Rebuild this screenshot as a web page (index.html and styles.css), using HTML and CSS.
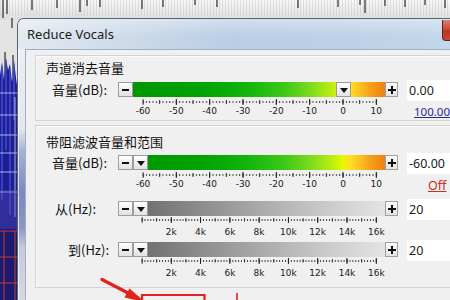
FILE: index.html
```html
<!DOCTYPE html>
<html>
<head>
<meta charset="utf-8">
<link rel="stylesheet" href="styles.css">
</head>
<body>
<svg class="bg" width="450" height="300" viewBox="0 0 450 300">
  <defs>
    <linearGradient id="topg" x1="0" y1="0" x2="0" y2="1">
      <stop offset="0" stop-color="#f8f8f8"/>
      <stop offset="1" stop-color="#dcdcdc"/>
    </linearGradient>
    <pattern id="streak" patternUnits="userSpaceOnUse" width="3" height="20">
      <rect x="0" y="0" width="1" height="20" fill="#c9c9c9"/>
    </pattern>
  </defs>
  <rect width="450" height="300" fill="#e4e4e4"/>
  <rect width="450" height="20" fill="url(#topg)"/>
  <rect width="450" height="16" fill="url(#streak)" opacity="0.55"/>
  <g stroke="#2a2a2a" stroke-width="1.2">
    <line x1="3" y1="0" x2="3" y2="18"/>
    <line x1="7" y1="0" x2="7" y2="14"/>
    <line x1="32" y1="0" x2="32" y2="10"/>
    <line x1="57" y1="0" x2="57" y2="8"/>
    <line x1="80" y1="0" x2="80" y2="12"/>
    <line x1="87" y1="0" x2="87" y2="6"/>
    <line x1="100" y1="0" x2="100" y2="7"/>
    <line x1="142" y1="0" x2="142" y2="9"/>
    <line x1="163" y1="0" x2="163" y2="7"/>
    <line x1="195" y1="0" x2="195" y2="5"/>
    <line x1="217" y1="0" x2="217" y2="7"/>
    <line x1="298" y1="0" x2="298" y2="8"/>
    <line x1="338" y1="0" x2="338" y2="7"/>
    <line x1="360" y1="0" x2="360" y2="5"/>
    <line x1="365" y1="0" x2="365" y2="13"/>
    <line x1="385" y1="0" x2="385" y2="6"/>
    <line x1="405" y1="0" x2="405" y2="7"/>
    <line x1="425" y1="0" x2="425" y2="5"/>
    <line x1="445" y1="0" x2="445" y2="8"/>
    <line x1="5" y1="52" x2="5" y2="78"/>
    <line x1="12" y1="18" x2="12" y2="28"/>
    <line x1="13" y1="55" x2="13" y2="76"/>
  </g>
  <polygon points="0,75 2,62 4,80 6,58 8,70 10,64 12,82 14,60 16,78 17,85 17,230 0,230" fill="#1c1e92"/>
  <g stroke="#4a5ae0" stroke-width="1.2">
    <line x1="2" y1="66" x2="2" y2="200"/>
    <line x1="6" y1="60" x2="6" y2="150"/>
    <line x1="10" y1="68" x2="10" y2="215"/>
    <line x1="14" y1="64" x2="14" y2="120"/>
  </g>
  <g stroke="#d8dcff" stroke-width="1" opacity="0.75">
    <line x1="0" y1="93" x2="17" y2="93"/>
    <line x1="0" y1="115" x2="17" y2="115"/>
    <line x1="0" y1="135" x2="17" y2="135"/>
    <line x1="0" y1="153" x2="17" y2="153"/>
    <line x1="0" y1="172" x2="17" y2="172"/>
    <line x1="0" y1="192" x2="17" y2="192"/>
    <line x1="15" y1="97" x2="15" y2="217"/>
  </g>
  <rect x="0" y="190" width="17" height="40" fill="#5a4ab0" opacity="0.35"/>
  <rect x="0" y="229" width="17" height="71" fill="#1a1a6e"/>
  <g stroke="#c83a3a" stroke-width="1">
    <line x1="0" y1="231" x2="17" y2="231"/>
    <line x1="0" y1="257" x2="17" y2="257"/>
    <line x1="0" y1="283" x2="17" y2="283"/>
    <line x1="4" y1="231" x2="4" y2="300"/>
    <line x1="15" y1="231" x2="15" y2="300"/>
  </g>
</svg>

<div class="dialog">
  <div class="titlebar">
    <span class="title">Reduce Vocals</span>
    <span class="close"></span>
  </div>
  <div class="frame">
    <div class="client">
      <section class="group g1">
        <div class="legend">声道消去音量</div>
        <div class="row r1">
          <label class="lbl l-db">音量(dB):</label>
          <div class="slider">
            <span class="btn minus"></span>
            <div class="track db"><span class="thumb" style="left:203px"></span></div>
            <span class="btn plus"></span>
          </div>
          <div class="value">0.00</div>
        </div>
        <div class="row scale">
          <span></span>
          <svg class="ticks" width="280" height="21" viewBox="0 0 280 21">
            <defs>
              <pattern id="dbMinor" patternUnits="userSpaceOnUse" x="24.5" y="0" width="3.3333" height="21">
                <rect x="0" y="4" width="1" height="2" fill="#444"/>
              </pattern>
              <pattern id="dbMid" patternUnits="userSpaceOnUse" x="24.5" y="0" width="16.6667" height="21">
                <rect x="0" y="3" width="1" height="4" fill="#333"/>
              </pattern>
              <pattern id="dbMajor" patternUnits="userSpaceOnUse" x="24.5" y="0" width="33.3333" height="21">
                <rect x="0" y="2" width="1" height="6" fill="#222"/>
              </pattern>
            </defs>
            <rect x="24.5" y="0" width="235" height="9" fill="url(#dbMinor)"/>
            <rect x="24.5" y="0" width="235" height="9" fill="url(#dbMid)"/>
            <rect x="24.5" y="0" width="235" height="9" fill="url(#dbMajor)"/>
            <g class="lab">
              <text x="25" y="17">-60</text><text x="58.3" y="17">-50</text><text x="91.7" y="17">-40</text><text x="125" y="17">-30</text>
              <text x="158.3" y="17">-20</text><text x="191.7" y="17">-10</text><text x="225" y="17">0</text><text x="258.3" y="17">10</text>
            </g>
          </svg>
          <a class="link blue">100.00</a>
        </div>
      </section>

      <section class="group g2">
        <div class="legend">带阻滤波音量和范围</div>
        <div class="row r2">
          <label class="lbl l-db">音量(dB):</label>
          <div class="slider">
            <span class="btn minus"></span>
            <div class="track db"><span class="thumb" style="left:0px"></span></div>
            <span class="btn plus"></span>
          </div>
          <div class="value">-60.00</div>
        </div>
        <div class="row scale">
          <span></span>
          <svg class="ticks" width="280" height="21" viewBox="0 0 280 21">
            <rect x="24.5" y="0" width="235" height="9" fill="url(#dbMinor)"/>
            <rect x="24.5" y="0" width="235" height="9" fill="url(#dbMid)"/>
            <rect x="24.5" y="0" width="235" height="9" fill="url(#dbMajor)"/>
            <g class="lab">
              <text x="25" y="17">-60</text><text x="58.3" y="17">-50</text><text x="91.7" y="17">-40</text><text x="125" y="17">-30</text>
              <text x="158.3" y="17">-20</text><text x="191.7" y="17">-10</text><text x="225" y="17">0</text><text x="258.3" y="17">10</text>
            </g>
          </svg>
          <a class="link red">Off</a>
        </div>

        <div class="row r3">
          <label class="lbl l-from">从(Hz):</label>
          <div class="slider">
            <span class="btn minus"></span>
            <div class="track hz"><span class="thumb" style="left:0px"></span></div>
            <span class="btn plus"></span>
          </div>
          <div class="value">20</div>
        </div>
        <div class="row scale hzs">
          <span></span>
          <svg class="ticks" width="280" height="23" viewBox="0 0 280 23">
            <defs>
              <pattern id="hzMinor" patternUnits="userSpaceOnUse" x="23.5" y="0" width="2.9286" height="23">
                <rect x="0" y="3" width="1" height="2" fill="#444"/>
              </pattern>
              <pattern id="hzMid" patternUnits="userSpaceOnUse" x="23.5" y="0" width="14.643" height="23">
                <rect x="0" y="2" width="1" height="3.5" fill="#333"/>
              </pattern>
              <pattern id="hzMajor" patternUnits="userSpaceOnUse" x="23.5" y="0" width="29.286" height="23">
                <rect x="0" y="1" width="1" height="6" fill="#222"/>
              </pattern>
            </defs>
            <rect x="23.5" y="0" width="236" height="8" fill="url(#hzMinor)"/>
            <rect x="23.5" y="0" width="236" height="8" fill="url(#hzMid)"/>
            <rect x="23.5" y="0" width="236" height="8" fill="url(#hzMajor)"/>
            <g class="lab">
              <text x="53.3" y="19">2k</text><text x="82.6" y="19">4k</text><text x="111.9" y="19">6k</text><text x="141.1" y="19">8k</text>
              <text x="170.4" y="19">10k</text><text x="199.7" y="19">12k</text><text x="229" y="19">14k</text><text x="258.3" y="19">16k</text>
            </g>
          </svg>
          <span></span>
        </div>

        <div class="row r4">
          <label class="lbl l-to">到(Hz):</label>
          <div class="slider">
            <span class="btn minus"></span>
            <div class="track hz"><span class="thumb" style="left:0px"></span></div>
            <span class="btn plus"></span>
          </div>
          <div class="value">20</div>
        </div>
        <div class="row scale hzs">
          <span></span>
          <svg class="ticks" width="280" height="23" viewBox="0 0 280 23">
            <rect x="23.5" y="0" width="236" height="8" fill="url(#hzMinor)"/>
            <rect x="23.5" y="0" width="236" height="8" fill="url(#hzMid)"/>
            <rect x="23.5" y="0" width="236" height="8" fill="url(#hzMajor)"/>
            <g class="lab">
              <text x="53.3" y="19">2k</text><text x="82.6" y="19">4k</text><text x="111.9" y="19">6k</text><text x="141.1" y="19">8k</text>
              <text x="170.4" y="19">10k</text><text x="199.7" y="19">12k</text><text x="229" y="19">14k</text><text x="258.3" y="19">16k</text>
            </g>
          </svg>
          <span></span>
        </div>
      </section>
    </div>
  </div>
</div>

<svg class="annot" width="450" height="300" viewBox="0 0 450 300">
  <g stroke="#e3201b" fill="none" stroke-linecap="round">
    <path d="M102 279.5 L128 293" stroke-width="3.2"/>
    <path d="M142 301 V295 H204.5 V301" stroke-width="2.2" stroke-linecap="butt"/>
    <path d="M237 293 V300" stroke-width="1.6" stroke-linecap="butt"/>
  </g>
  <polygon points="129.5,288.5 124.5,297.5 145,302" fill="#e3201b"/>
</svg>
</body>
</html>
```

FILE: styles.css
```css
* {
  box-sizing: border-box;
  margin: 0;
  padding: 0;
}

html, body {
  width: 450px;
  height: 300px;
  overflow: hidden;
}

body {
  position: relative;
  background: #e4e4e4;
  font-family: "Noto Sans CJK SC", "Noto Sans", sans-serif;
  color: #141414;
}

.bg {
  position: absolute;
  left: 0;
  top: 0;
}

.annot {
  position: absolute;
  left: 0;
  top: 0;
  z-index: 5;
  pointer-events: none;
}

/* window */
.dialog {
  position: absolute;
  left: 17px;
  top: 18px;
  width: 470px;
  height: 290px;
  display: flex;
  flex-direction: column;
  border-top: 1px solid #566474;
  border-left: 1px solid #566474;
  border-radius: 7px 0 0 0;
  overflow: hidden;
  background: linear-gradient(to bottom, #eef1f5 0%, #e3e7ed 38%, #a6b0d6 46%, #7b89c4 60%, #8c96c6 72%, #c6cad9 79%, #d9dbe3 100%);
  box-shadow: inset 1px 1px 0 rgba(255,255,255,0.7);
}

.titlebar {
  height: 30px;
  flex: none;
  display: flex;
  align-items: flex-start;
  background:
    linear-gradient(to bottom, rgba(255,255,255,0.35), rgba(255,255,255,0) 60%),
    linear-gradient(to right, #e4e9ef 0%, #d0dcea 20%, #b9cee5 45%, #bcd1e7 70%, #c6d9ed 100%);
}

.title {
  flex: 1;
  padding: 6px 0 0 9px;
  font-family: "Noto Sans", sans-serif;
  font-size: 13px;
  line-height: 18px;
  color: #1b1b1b;
}

.close {
  flex: none;
  width: 45px;
  height: 21px;
  margin-top: 1px;
  border: 1px solid #5e241c;
  border-top: none;
  border-radius: 0 0 4px 4px;
  background: linear-gradient(to bottom, #d98070 0%, #cc4d38 45%, #bb3420 55%, #c84a30 100%);
}

.frame {
  flex: 1;
  display: flex;
  padding-left: 7px;
}

.client {
  flex: 1;
  background: #f0f0f0;
  border-top: 1px solid #9fb0c2;
  border-left: 1px solid #9fb0c2;
  padding-left: 9px;
}

/* group boxes */
.group {
  border: 1px solid #d3d3d3;
  border-right: none;
  box-shadow: inset 1px 1px 0 #fbfbfb;
}

.g1 {
  margin-top: 5px;
  padding: 4px 0 2px 0;
}

.g2 {
  margin-top: 4px;
  padding: 8px 0 7px 0;
}

.legend {
  margin-left: 10px;
  font-size: 13px;
  line-height: 16px;
  color: #111;
}

.row {
  display: grid;
  grid-template-columns: 82px 280px 1fr;
  align-items: center;
}

.r1 { margin-top: 6px; }
.r2 { margin-top: 5px; }
.r3 { margin-top: 10px; }
.r4 { margin-top: 3px; }

.lbl {
  font-size: 13px;
  line-height: 15px;
  white-space: nowrap;
  color: #111;
}

.l-db { margin-left: 16px; }
.l-from { margin-left: 19px; }
.l-to { margin-left: 32px; }

/* slider */
.slider {
  display: flex;
  height: 15px;
}

.btn {
  flex: none;
  position: relative;
  width: 15px;
  height: 15px;
  border: 1px solid #9c9c9c;
  background: linear-gradient(to bottom, #ffffff, #e2e2e2);
}

.btn.plus {
  width: 13px;
  border-color: #a0a0a0;
}

.minus::after {
  content: "";
  position: absolute;
  left: 3px;
  top: 5.5px;
  width: 7px;
  height: 2px;
  background: #111;
}

.plus::before,
.plus::after {
  content: "";
  position: absolute;
  background: #111;
}

.plus::before {
  left: 1.5px;
  top: 5.5px;
  width: 8px;
  height: 2px;
}

.plus::after {
  left: 4.5px;
  top: 2.5px;
  width: 2px;
  height: 8px;
}

.track {
  flex: 1;
  position: relative;
  height: 15px;
}

.track.db {
  background: linear-gradient(to right, #009600 0%, #00a400 28%, #12b40c 45%, #3cc818 60%, #7ada1c 70%, #bcee12 79%, #e4f800 83%, #ffe020 86%, #fcc024 90%, #f49a18 95%, #ef8410 100%);
}

.track.hz {
  background: linear-gradient(to right, #696969 0%, #8a8a8a 25%, #a9a9a9 50%, #c8c8c8 75%, #e4e4e4 100%);
}

.thumb {
  position: absolute;
  top: 0;
  width: 15px;
  height: 15px;
  border: 1px solid #9c9c9c;
  background: linear-gradient(to bottom, #ffffff, #e2e2e2);
}

.thumb::after {
  content: "";
  position: absolute;
  left: 2.5px;
  top: 4.5px;
  border-left: 4.5px solid transparent;
  border-right: 4.5px solid transparent;
  border-top: 5px solid #111;
}

.value {
  margin: -2px 0 -4px 9px;
  height: 21px;
  width: 70px;
  background: #ffffff;
  padding-left: 2px;
  font-family: "Noto Sans", sans-serif;
  font-size: 12.5px;
  line-height: 21px;
  color: #1a1a1a;
}

/* scales */
.scale {
  height: 21px;
  align-items: start;
}

.scale.hzs {
  height: 23px;
}

.ticks {
  display: block;
}

.lab text {
  font-family: "DejaVu Sans", sans-serif;
  font-size: 9px;
  fill: #202020;
  text-anchor: middle;
}

.link {
  margin-left: 9px;
  font-family: "Noto Sans", sans-serif;
  line-height: 14px;
  text-decoration: underline;
  white-space: nowrap;
}

.link.blue {
  color: #27279a;
  font-size: 11.5px;
  padding: 8px 0 0 7px;
}

.link.red {
  color: #cc2a22;
  font-size: 12.5px;
  padding: 9px 0 0 21px;
}
```
